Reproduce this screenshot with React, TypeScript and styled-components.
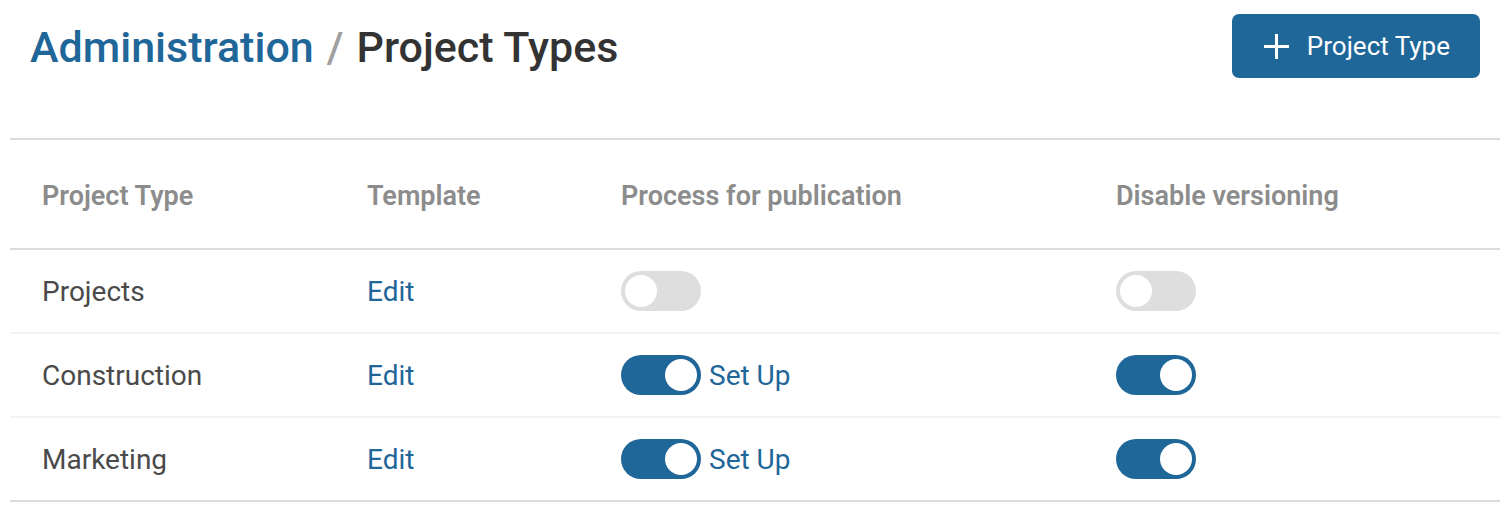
import React from 'react';
import styled, { createGlobalStyle } from 'styled-components';

const GlobalStyle = createGlobalStyle`
    html, body {
        margin: 0;
        padding: 0;
        background: #ffffff;
        font-family: Roboto, "Liberation Sans", Arial, sans-serif;
    }
`;

const BLUE = '#1f6699';

const Page = styled.div`
    width: 1509px;
    height: 520px;
    box-sizing: border-box;
    padding: 14px 9px 0 10px;
    overflow: hidden;
`;

const Header = styled.header`
    display: flex;
    justify-content: space-between;
    align-items: flex-start;
    height: 124px;
`;

const Breadcrumb = styled.h1`
    margin: 0;
    padding: 10px 0 0 20px;
    font-size: 43px;
    font-weight: 500;
    line-height: 1.1;
    color: #333333;
`;

const Crumb = styled.a`
    color: ${BLUE};
    text-decoration: none;
`;

const Slash = styled.span`
    color: #a0a0a0;
    margin: 0 13px;
`;

const AddButton = styled.button`
    display: flex;
    align-items: center;
    gap: 18px;
    height: 64px;
    padding: 0 30px 0 32px;
    margin-right: 20px;
    border: none;
    border-radius: 7px;
    background: ${BLUE};
    color: #ffffff;
    font-family: inherit;
    font-size: 26px;
    cursor: pointer;
`;

const Table = styled.table`
    width: 100%;
    border-collapse: collapse;
    border-top: 2px solid #dcdcdc;
    border-bottom: 2px solid #dcdcdc;
    table-layout: fixed;
`;

const Th = styled.th<{ $w: number }>`
    box-sizing: border-box;
    width: ${({ $w }) => $w}px;
    height: 110px;
    padding: 4px 0 0 32px;
    text-align: left;
    font-size: 27px;
    font-weight: 600;
    color: #8c8c8c;
    border-bottom: 2px solid #dcdcdc;
    white-space: nowrap;
`;

const Row = styled.tr`
    & + & td {
        border-top: 2px solid #f3f3f3;
    }
`;

const Td = styled.td`
    height: 82px;
    padding: 0 0 0 32px;
    font-size: 28px;
    color: #4a4a4a;
`;

const Link = styled.a`
    color: ${BLUE};
    text-decoration: none;
`;

const ToggleWrap = styled.div`
    display: flex;
    align-items: center;
    gap: 8px;
`;

const Track = styled.span<{ $on: boolean }>`
    display: inline-flex;
    align-items: center;
    justify-content: ${({ $on }) => ($on ? 'flex-end' : 'flex-start')};
    box-sizing: border-box;
    width: 80px;
    height: 40px;
    padding: 4px;
    border-radius: 20px;
    background: ${({ $on }) => ($on ? BLUE : '#dedede')};
`;

const Knob = styled.span`
    width: 32px;
    height: 32px;
    border-radius: 50%;
    background: #ffffff;
`;

const SetUp = styled.a`
    color: ${BLUE};
    font-size: 28px;
    text-decoration: none;
`;

function Toggle({ on, label }: { on: boolean; label?: string }) {
    return (
        <ToggleWrap>
            <Track $on={on}>
                <Knob />
            </Track>
            {label && <SetUp>{label}</SetUp>}
        </ToggleWrap>
    );
}

const rows = [
    { name: 'Projects', publish: false, versioning: false },
    { name: 'Construction', publish: true, versioning: true },
    { name: 'Marketing', publish: true, versioning: true },
];

export default function App() {
    return (
        <Page>
            <GlobalStyle />
            <Header>
                <Breadcrumb>
                    <Crumb>Administration</Crumb>
                    <Slash>/</Slash>
                    Project Types
                </Breadcrumb>
                <AddButton>
                    <svg width="25" height="25" viewBox="0 0 25 25" fill="none" stroke="#ffffff" strokeWidth="3">
                        <path d="M12.5 0v25M0 12.5h25" />
                    </svg>
                    Project Type
                </AddButton>
            </Header>
            <Table>
                <thead>
                    <tr>
                        <Th $w={325}>Project Type</Th>
                        <Th $w={254}>Template</Th>
                        <Th $w={495}>Process for publication</Th>
                        <Th $w={416}>Disable versioning</Th>
                    </tr>
                </thead>
                <tbody>
                    {rows.map((r) => (
                        <Row key={r.name}>
                            <Td>{r.name}</Td>
                            <Td>
                                <Link>Edit</Link>
                            </Td>
                            <Td>
                                <Toggle on={r.publish} label={r.publish ? 'Set Up' : undefined} />
                            </Td>
                            <Td>
                                <Toggle on={r.versioning} />
                            </Td>
                        </Row>
                    ))}
                </tbody>
            </Table>
        </Page>
    );
}
